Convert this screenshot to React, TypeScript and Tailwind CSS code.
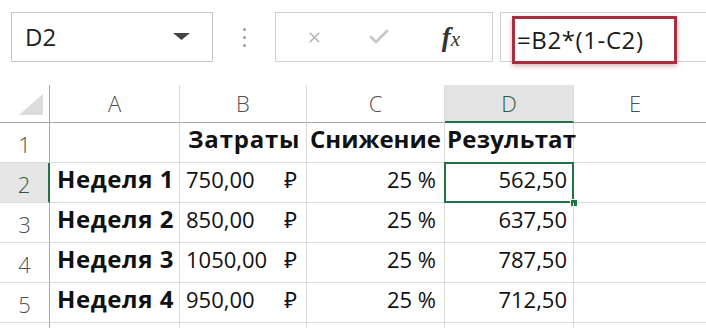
import { X, Check } from 'lucide-react'

const rows = [
  { n: 2, label: 'Неделя 1', cost: '750,00', cut: '25 %', res: '562,50' },
  { n: 3, label: 'Неделя 2', cost: '850,00', cut: '25 %', res: '637,50' },
  { n: 4, label: 'Неделя 3', cost: '1050,00', cut: '25 %', res: '787,50' },
  { n: 5, label: 'Неделя 4', cost: '950,00', cut: '25 %', res: '712,50' },
]

const cols = 'grid grid-cols-[50px_130px_127px_138px_129px_1fr]'
const cell = 'border-r border-b border-[#dadada] flex items-center whitespace-nowrap overflow-visible'

function Toolbar() {
  return (
    <div className="h-[85px] flex items-start pt-[12px]">
      <div className="ml-[11px] w-[202px] h-[50px] border border-[#c6c6c6] bg-white flex items-center justify-between pl-[13px] pr-[22px]">
        <span className="text-[24px] text-[#222]">D2</span>
        <svg width="17" height="8" viewBox="0 0 17 8">
          <path d="M0 0h17L8.5 7z" fill="#444" />
        </svg>
      </div>
      <div className="w-[62px] h-[50px] flex flex-col items-center justify-center gap-[5px]">
        <span className="w-[3px] h-[3px] rounded-full bg-[#9a9a9a]" />
        <span className="w-[3px] h-[3px] rounded-full bg-[#9a9a9a]" />
        <span className="w-[3px] h-[3px] rounded-full bg-[#9a9a9a]" />
      </div>
      <div className="w-[218px] h-[50px] border border-[#d0d0d0] bg-white flex items-center">
        <div className="w-[76px] flex justify-center">
          <X size={17} strokeWidth={2.2} className="text-[#b4b4b4]" />
        </div>
        <div className="w-[54px] flex justify-center">
          <Check size={24} strokeWidth={2.6} className="text-[#c6c6c6]" />
        </div>
        <div className="flex-1 flex justify-center pl-[4px]">
          <span className="font-['Liberation_Serif',serif] italic font-bold text-[27px] text-[#333] leading-none">
            f<span className="text-[21px] font-normal">x</span>
          </span>
        </div>
      </div>
      <div className="relative ml-[7px] flex-1 h-[50px] border-y border-l border-[#d0d0d0] bg-white">
        <div className="absolute left-[11px] top-[3px] w-[165px] h-[48px] border-[3px] border-[#a8303e] shadow-[0_2px_5px_rgba(140,30,40,0.35)] flex items-center pl-[2px]">
          <span className="text-[24px] text-[#1a1a1a] tracking-[0.6px]">=B2*(1-C2)</span>
        </div>
      </div>
    </div>
  )
}

export default function App() {
  return (
    <div className="w-[706px] h-[328px] overflow-hidden bg-white font-['Open_Sans','Noto_Sans','DejaVu_Sans',sans-serif]">
      <Toolbar />
      <div className={`${cols} grid-rows-[38px_40px_40px_40px_40px_40px_40px]`}>
        {/* column headers */}
        <div className="border-r border-b border-[#a8a8a8] flex items-end justify-end pr-[6px] pb-[7px]">
          <svg width="24" height="21" viewBox="0 0 24 21">
            <path d="M24 0v21H0z" fill="#dcdcdc" />
          </svg>
        </div>
        {['A', 'B', 'C'].map((c) => (
          <div key={c} className="border-r border-[#dadada] border-b border-b-[#a8a8a8] flex items-center justify-center text-[22px] text-[#505050] font-light">
            {c}
          </div>
        ))}
        <div className="border-r border-[#dadada] bg-[#e3e3e3] border-b-[2px] border-b-[#217346] flex items-center justify-center text-[22px] text-[#2a5c3a] font-light">
          D
        </div>
        <div className="border-b border-[#a8a8a8] flex items-center justify-center text-[22px] text-[#505050] font-light pr-[10px]">
          E
        </div>

        {/* row 1 */}
        <div className="border-r border-[#a8a8a8] border-b border-b-[#dadada] flex items-center justify-center text-[22px] text-[#505050] font-light pt-[4px]">
          1
        </div>
        <div className={cell} />
        <div className={`${cell} pl-[8px] pb-[7px] font-bold text-[24px] text-[#111] tracking-[0.8px]`}>Затраты</div>
        <div className={`${cell} pl-[3px] pb-[7px] font-bold text-[24px] text-[#111]`}>Снижение</div>
        <div className={`${cell} pl-[2px] pb-[7px] font-bold text-[24px] text-[#111] tracking-[0.2px]`}>Результат</div>
        <div className="border-b border-[#dadada]" />

        {rows.map((r) => {
          const sel = r.n === 2
          return [
            <div
              key={`h${r.n}`}
              className={`border-b border-b-[#dadada] flex items-center justify-center text-[22px] font-light pt-[4px] ${
                sel ? 'bg-[#e6e6e6] border-r-[2px] border-r-[#217346] text-[#2a5c3a]' : 'border-r border-r-[#a8a8a8] text-[#505050]'
              }`}
            >
              {r.n}
            </div>,
            <div key={`a${r.n}`} className={`${cell} pl-[7px] pb-[7px] font-bold text-[24px] text-[#111] tracking-[0.6px]`}>
              {r.label}
            </div>,
            <div key={`b${r.n}`} className={`${cell} justify-between pl-[6px] pr-[9px] pb-[7px] text-[22px] text-[#111]`}>
              <span>{r.cost}</span>
              <span>₽</span>
            </div>,
            <div key={`c${r.n}`} className={`${cell} justify-end pr-[8px] pb-[7px] text-[22px] text-[#111]`}>
              {r.cut}
            </div>,
            <div key={`d${r.n}`} className={`${cell} relative justify-end pr-[6px] pb-[7px] text-[22px] text-[#111]`}>
              {sel && (
                <>
                  <div className="absolute -left-[1px] -top-[1px] -right-[1px] -bottom-[1px] border-[2px] border-[#217346]" />
                  <div className="absolute -right-[5px] -bottom-[5px] w-[8px] h-[8px] bg-[#217346] border border-white" />
                </>
              )}
              {r.res}
            </div>,
            <div key={`e${r.n}`} className="border-b border-[#dadada]" />,
          ]
        })}

        {/* row 6 partially visible */}
        <div className="border-r border-[#a8a8a8] border-b border-b-[#dadada]" />
        <div className={cell} />
        <div className={cell} />
        <div className={cell} />
        <div className={cell} />
        <div className="border-b border-[#dadada]" />
      </div>
    </div>
  )
}
